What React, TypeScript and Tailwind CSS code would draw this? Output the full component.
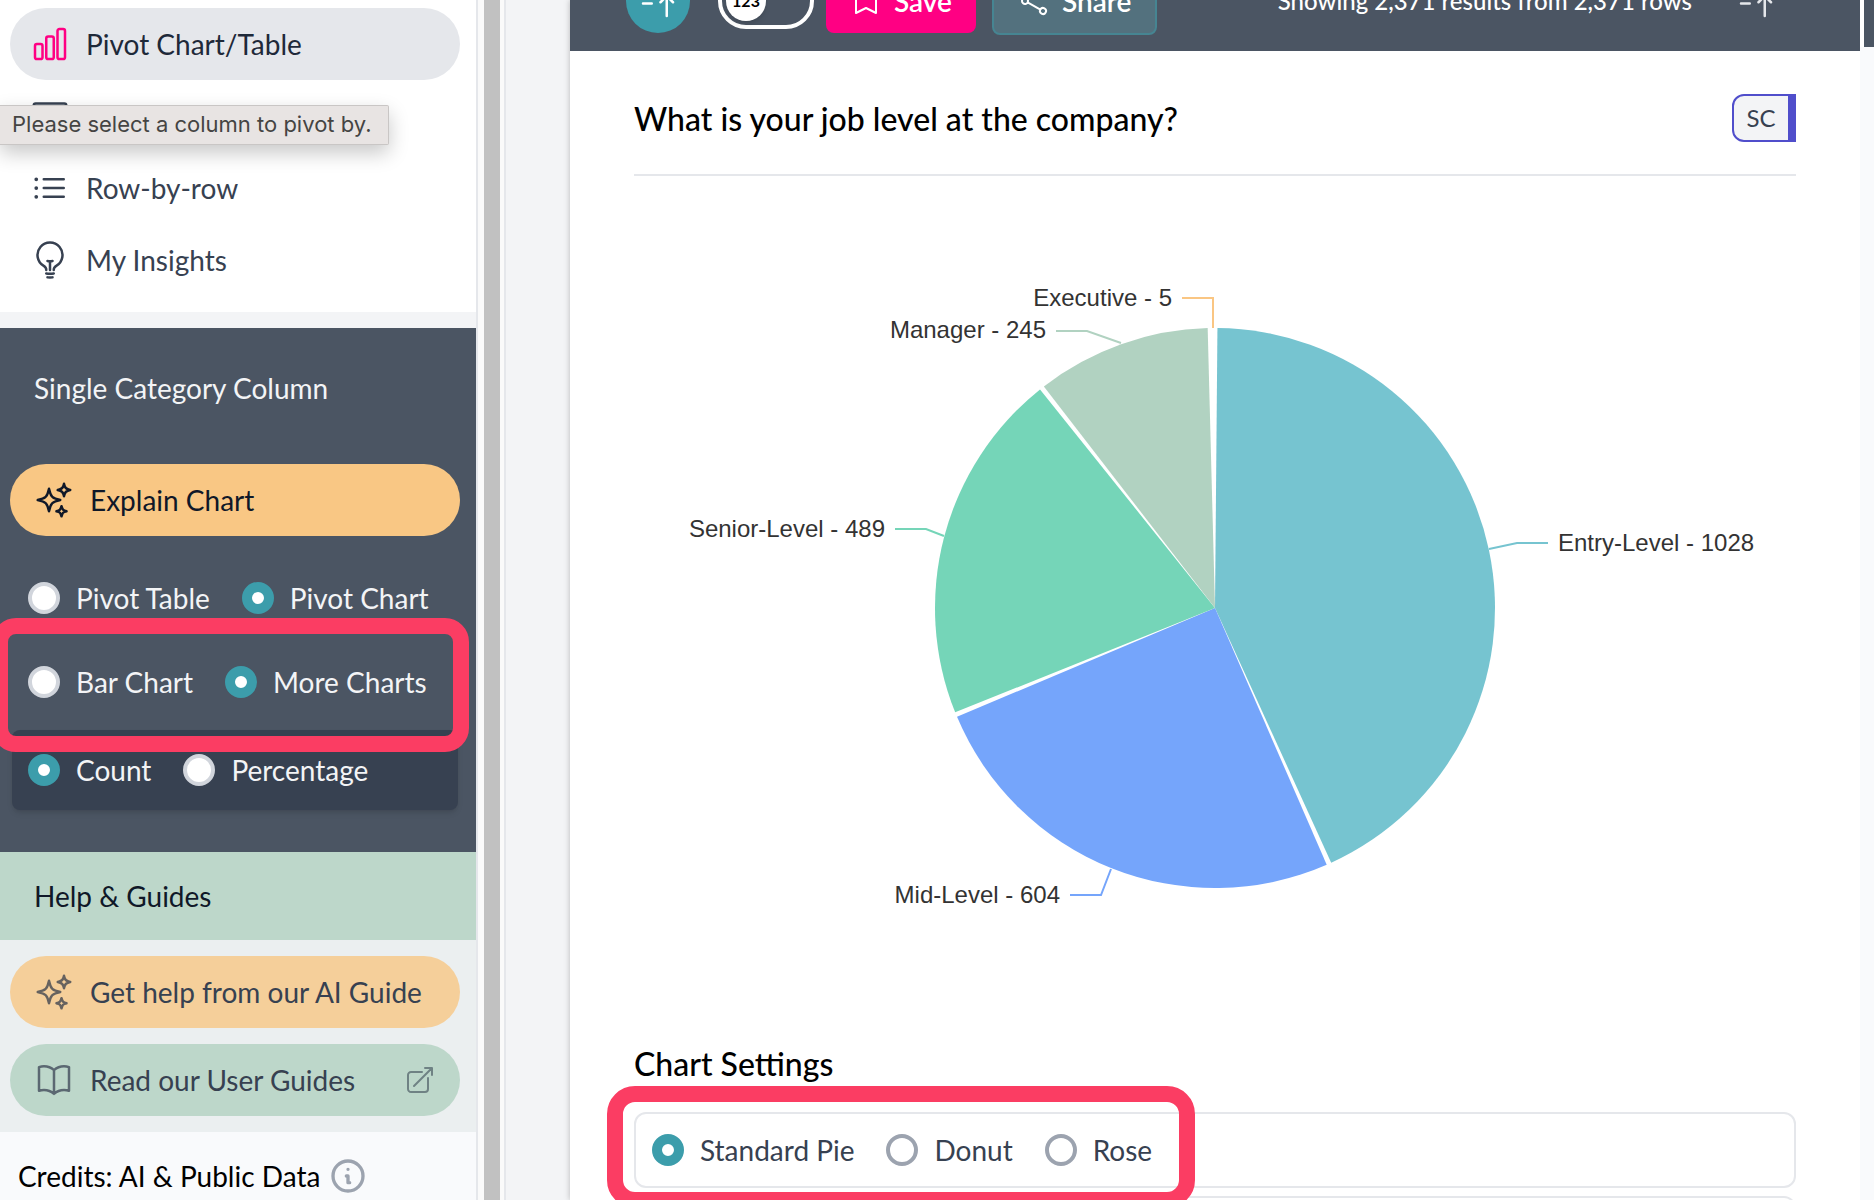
import React from "react";
import {
  HiOutlineArrowTopRightOnSquare,
  HiOutlineBarsArrowUp,
  HiOutlineBookOpen,
  HiOutlineBookmark,
  HiOutlineChartBar,
  HiOutlineLightBulb,
  HiOutlineListBullet,
  HiOutlineShare,
  HiOutlineSparkles,
  HiOutlineTableCells,
} from "react-icons/hi2";
import { HiOutlineInformationCircle } from "react-icons/hi";

type RadioProps = { name: string; label: string; checked?: boolean; dark?: boolean };

function Radio({ name, label, checked, dark }: RadioProps) {
  return (
    <label className={`flex items-center gap-4 whitespace-nowrap ${dark ? "text-gray-100" : "text-[#374151]"}`}>
      <input
        type="radio"
        name={name}
        defaultChecked={checked}
        className={`size-8 shrink-0 appearance-none rounded-full border-4 bg-white checked:border-[10px] checked:border-[#3c9dab] ${
          dark ? "border-gray-300" : "border-[#9ca3af]"
        }`}
      />
      {label}
    </label>
  );
}

type Slice = {
  label: string;
  value: number;
  color: string;
  line: string;
  x: number;
  y: number;
  anchor: "start" | "end";
};

const slices: Slice[] = [
  { label: "Entry-Level", value: 1028, color: "#76c4d0", line: "855,373 883,367 914,367", x: 924, y: 375, anchor: "start" },
  { label: "Mid-Level", value: 604, color: "#75a5fb", line: "477,693 467,719 436,719", x: 426, y: 727, anchor: "end" },
  { label: "Senior-Level", value: 489, color: "#75d5b8", line: "310,360 292,353 261,353", x: 251, y: 361, anchor: "end" },
  { label: "Manager", value: 245, color: "#b1d2c1", line: "487,167 453,155 422,155", x: 412, y: 162, anchor: "end" },
  { label: "Executive", value: 5, color: "#fac683", line: "579,152 579,122 548,122", x: 538, y: 130, anchor: "end" },
];

const CX = 581;
const CY = 432;
const R = 280;
const PAD = 1;

function point(deg: number) {
  const a = ((deg - 90) * Math.PI) / 180;
  return `${(CX + R * Math.cos(a)).toFixed(2)} ${(CY + R * Math.sin(a)).toFixed(2)}`;
}

function PieChart() {
  const small = slices.filter((s) => s.value < 10);
  const total = slices.reduce((n, s) => n + s.value, 0) - small.reduce((n, s) => n + s.value, 0);
  const available = 360 - small.length * PAD;
  let angle = 0;
  return (
    <svg viewBox="0 0 1162 848" className="mx-auto block h-[848px] w-full" role="img" aria-label="Job level pie chart">
      {slices.map((s) => {
        const sweep = s.value < 10 ? PAD : (s.value / total) * available;
        const from = angle + PAD / 2;
        const to = angle + sweep - PAD / 2;
        angle += sweep;
        return (
          <g key={s.label}>
            {to > from + 0.01 && (
              <path
                d={`M${CX} ${CY}L${point(from)}A${R} ${R} 0 ${to - from > 180 ? 1 : 0} 1 ${point(to)}Z`}
                fill={s.color}
              />
            )}
            <polyline points={s.line} fill="none" stroke={s.color} strokeWidth="2" />
            <text x={s.x} y={s.y} textAnchor={s.anchor} fill="#333333" className="font-['Liberation_Sans',sans-serif] text-[24px]">
              {`${s.label} - ${s.value}`}
            </text>
          </g>
        );
      })}
    </svg>
  );
}

const navItem = "flex h-[72px] w-full items-center gap-4 rounded-full px-5 text-[#374151]";
const pill = "flex h-[72px] w-full items-center gap-4 rounded-full px-6";

function Sidebar() {
  return (
    <aside className="relative flex w-[478px] shrink-0 flex-col border-r-2 border-gray-200 bg-[#f9fafc]">
      <nav className="shrink-0 bg-white pt-2 pr-4 pb-4 pl-[10px]">
        <button className={`${navItem} bg-gray-200 text-gray-800`}>
          <HiOutlineChartBar className="size-10 text-[#ff0083]" />
          Pivot Chart/Table
        </button>
        <button className={navItem} aria-label="Table">
          <HiOutlineTableCells className="size-10" />
        </button>
        <button className={navItem}>
          <HiOutlineListBullet className="size-10" />
          Row-by-row
        </button>
        <button className={navItem}>
          <HiOutlineLightBulb className="size-10" />
          My Insights
        </button>
      </nav>
      <div
        role="tooltip"
        className="absolute top-[105px] left-0 flex h-10 items-center rounded-r-xs border border-l-0 border-[#c9c6c5] bg-[#e8e4e3] pr-4 pb-[2px] pl-3 font-['Inter',sans-serif] text-[22px] whitespace-nowrap text-[#454443] shadow-[0_8px_20px_rgba(0,0,0,0.22)]"
      >
        Please select a column to pivot by.
      </div>

      <div className="h-4 shrink-0 bg-gray-100" />
      <section className="relative shrink-0 bg-[#4b5563] pt-9 pr-4 pb-[42px] pl-[10px]">
        <h2 className="pl-6 leading-[48px] text-gray-100">Single Category Column</h2>
        <button className={`${pill} mt-[52px] bg-[#f9c784] text-gray-900`}>
          <HiOutlineSparkles className="size-10" />
          Explain Chart
        </button>
        <div className="mt-[26px] flex h-[72px] items-center gap-8 pl-[18px]">
          <Radio name="view" label="Pivot Table" dark />
          <Radio name="view" label="Pivot Chart" dark checked />
        </div>
        <div className="mt-3 flex h-[72px] items-center gap-8 pl-[18px]">
          <Radio name="type" label="Bar Chart" dark />
          <Radio name="type" label="More Charts" dark checked />
        </div>
        <div className="mt-3 mr-[2px] ml-[2px] flex h-20 items-center gap-8 rounded-lg bg-[#374151] pl-4 shadow-md">
          <Radio name="unit" label="Count" dark checked />
          <Radio name="unit" label="Percentage" dark />
        </div>
        <div className="pointer-events-none absolute top-[290px] right-[7px] -left-2 h-[134px] rounded-[24px] border-16 border-[#fb3d63]" />
      </section>

      <h2 className="shrink-0 bg-[#bdd7ca] pl-[34px] leading-[88px] text-gray-900">Help &amp; Guides</h2>
      <div className="flex shrink-0 flex-col gap-4 bg-[#ebeff0] py-4 pr-4 pl-[10px]">
        <button className={`${pill} bg-[#f5cf9a] text-[#374151]`}>
          <HiOutlineSparkles className="size-10 text-[#66625f]" />
          Get help from our AI Guide
        </button>
        <a href="#guides" className={`${pill} bg-[#bdd7ca] text-[#374151]`}>
          <HiOutlineBookOpen className="size-10 text-[#5b6872]" />
          Read our User Guides
          <HiOutlineArrowTopRightOnSquare className="ml-auto size-8 text-[#6f8284]" />
        </a>
      </div>
      <div className="flex h-[88px] shrink-0 items-center gap-2 pl-[18px] text-black">
        Credits: AI &amp; Public Data
        <HiOutlineInformationCircle className="size-10 text-[#9ca3af]" />
      </div>
    </aside>
  );
}

function Toolbar() {
  return (
    <header className="flex h-[51px] shrink-0 flex-col justify-end overflow-hidden bg-[#4b5563] text-white">
      <div className="flex h-[100px] shrink-0 items-center pr-[84px] pl-14">
        <button aria-label="Sort" className="flex size-16 items-center justify-center rounded-full bg-[#3c9dab]">
          <HiOutlineBarsArrowUp className="size-10" />
        </button>
        <button
          role="switch"
          aria-checked="false"
          className="ml-7 flex h-14 w-24 items-center rounded-full border-4 border-white pl-1"
        >
          <span className="flex size-10 items-center justify-center rounded-full bg-white text-[16px] font-bold text-black shadow-md">
            123
          </span>
        </button>
        <button className="ml-3 flex h-16 items-center gap-3 rounded-lg bg-[#ff0083] px-6 font-semibold">
          <HiOutlineBookmark className="size-8" />
          Save
        </button>
        <button className="ml-4 flex h-[68px] items-center gap-3 rounded-lg border-2 border-[#468592] bg-[#53717e] px-6 font-semibold">
          <HiOutlineShare className="size-8" />
          Share
        </button>
        <p className="ml-auto text-[24px] font-medium">Showing 2,371 results from 2,371 rows</p>
        <button aria-label="Sort rows" className="ml-11 text-gray-200">
          <HiOutlineBarsArrowUp className="size-10" />
        </button>
      </div>
    </header>
  );
}

export default function App() {
  return (
    <div className="flex h-screen overflow-hidden bg-gray-100 font-['Lato',sans-serif] text-[28px] leading-9">
      <Sidebar />
      <div className="w-7 shrink-0 border-r-2 border-gray-200 bg-[#fafafa] pr-1 pl-[6px]">
        <div className="h-full bg-[#c1c1c1]" />
      </div>
      <main className="ml-16 flex min-w-0 flex-1 flex-col bg-white shadow-[0_0_6px_rgba(0,0,0,0.25)]">
        <Toolbar />
        <div className="px-16 pt-[43px]">
          <div className="flex items-start justify-between border-b-2 border-gray-200 pb-[30px]">
            <h1 className="text-[32px] leading-[50px] font-medium text-black">What is your job level at the company?</h1>
            <span className="flex h-12 w-16 items-center justify-center rounded-l-xl border-2 border-r-8 border-[#504ecb] bg-gray-100 text-[24px] text-[#374151]">
              SC
            </span>
          </div>
          <PieChart />
          <h2 className="mt-4 text-[32px] leading-[48px] font-medium text-black">Chart Settings</h2>
          <div className="relative mt-6 flex h-[76px] items-center gap-8 rounded-xl border-2 border-gray-200 pl-4">
            <Radio name="pie" label="Standard Pie" checked />
            <Radio name="pie" label="Donut" />
            <Radio name="pie" label="Rose" />
            <div className="pointer-events-none absolute -top-7 -left-[29px] h-[122px] w-[588px] rounded-[28px] border-16 border-[#fb3d63]" />
          </div>
          <div className="mt-2 h-[76px] rounded-xl border-2 border-gray-200" />
        </div>
      </main>
      <div className="w-[14px] shrink-0 bg-[#f9fafc]">
        <div className="h-[47px] border-l-4 border-white bg-[#4b5563]" />
      </div>
    </div>
  );
}
